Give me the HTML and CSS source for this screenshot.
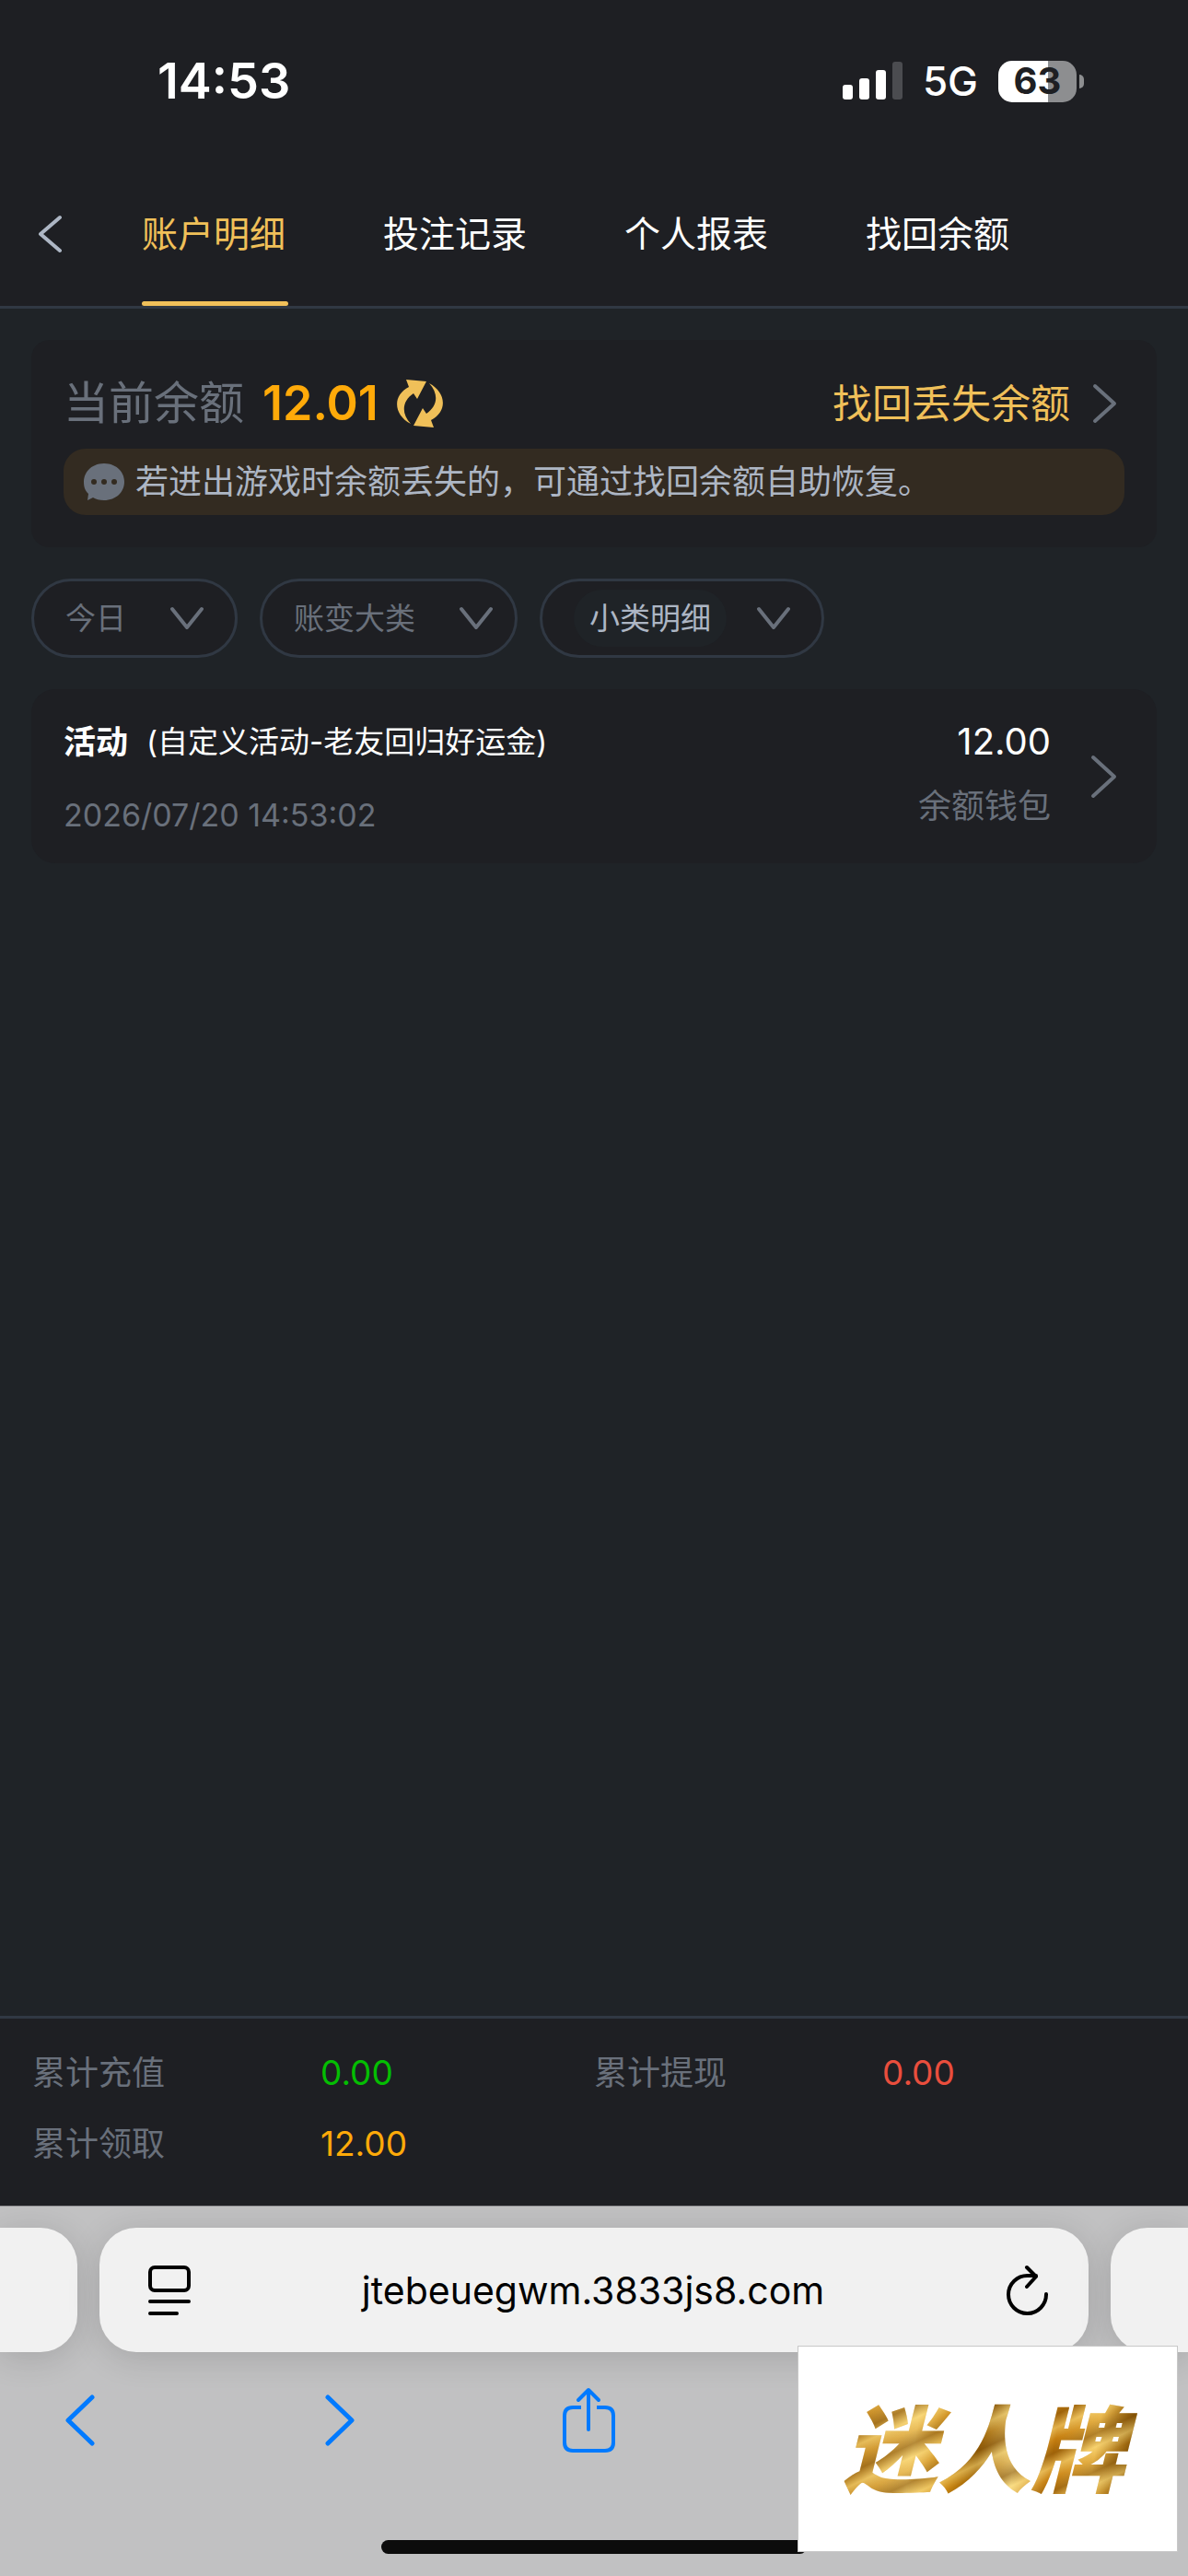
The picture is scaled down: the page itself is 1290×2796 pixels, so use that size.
FILE: index.html
```html
<!DOCTYPE html>
<html lang="zh-CN">
<head>
<meta charset="utf-8">
<meta name="viewport" content="width=device-width, initial-scale=1">
<title>账户明细</title>
<link rel="stylesheet" href="styles.css">
</head>
<body>
<header class="top">
  <div class="status">
    <time class="clock">14:53</time>
    <div class="indicators">
      <svg class="signal" width="65" height="42" viewBox="0 0 65 42" aria-hidden="true">
        <g fill="#fff"><rect y="25" width="11" height="16" rx="3"/><rect x="18" y="18" width="11" height="23" rx="3"/><rect x="36" y="9" width="11" height="32" rx="3"/></g>
        <rect x="54" width="11" height="41" rx="3" fill="#4b4c50"/>
      </svg>
      <span class="network">5G</span>
      <span class="battery"><span class="level">63</span><i class="nub"></i></span>
    </div>
  </div>
  <nav class="tabs">
    <button class="back" type="button" aria-label="返回">
      <svg width="27" height="42" viewBox="0 0 27 42"><path d="M24 3 3 21 24 39"/></svg>
    </button>
    <a class="tab active" href="#detail">账户明细</a>
    <a class="tab" href="#bets">投注记录</a>
    <a class="tab" href="#report">个人报表</a>
    <a class="tab" href="#recover">找回余额</a>
  </nav>
</header>

<main class="content">
  <section class="card balance">
    <div class="balance-row">
      <span class="balance-label">当前余额</span>
      <strong class="amount">12.01</strong>
      <button class="refresh" type="button" aria-label="刷新">
        <svg width="50" height="52" viewBox="0 0 50 52"><path id="half" d="M10 0 32 2 22 21 18 15C6 23 4 36 15 48-4 38-5 17 13 8Z"/><use href="#half" transform="rotate(180 25 26)"/></svg>
      </button>
      <a class="recover" href="#recover">找回丢失余额
        <svg class="chevron" width="27" height="44" viewBox="0 0 27 44"><path d="M3 3 24 22 3 41"/></svg>
      </a>
    </div>
    <p class="notice">
      <svg width="46" height="42" viewBox="0 0 46 42" aria-hidden="true"><path fill="#69707b" d="M23 1C36 1 45 10 45 21S36 41 23 41C18 41 14 40 11 38L5 41 6 34C2 30 1 26 1 21 1 10 10 1 23 1Z"/><g fill="#332b21"><circle cx="12" cy="21" r="3"/><circle cx="23" cy="21" r="3"/><circle cx="34" cy="21" r="3"/></g></svg>
      <span>若进出游戏时余额丢失的，可通过找回余额自助恢复。</span>
    </p>
  </section>

  <form class="filters">
    <label class="pill">
      <select aria-label="日期"><option>今日</option></select>
      <svg class="chevron" width="36" height="26" viewBox="0 0 36 26"><path d="M2 3 18 23 34 3"/></svg>
    </label>
    <label class="pill wide">
      <select aria-label="账变大类"><option>账变大类</option></select>
      <svg class="chevron" width="36" height="26" viewBox="0 0 36 26"><path d="M2 3 18 23 34 3"/></svg>
    </label>
    <label class="pill chosen">
      <select aria-label="小类明细"><option>小类明细</option></select>
      <svg class="chevron" width="36" height="26" viewBox="0 0 36 26"><path d="M2 3 18 23 34 3"/></svg>
    </label>
  </form>

  <a class="card record" href="#record">
    <span class="record-main">
      <span class="record-title"><b>活动</b><span>(自定义活动-老友回归好运金)</span></span>
      <time class="record-time">2026/07/20 14:53:02</time>
    </span>
    <span class="record-side">
      <span class="record-amount">12.00</span>
      <span class="wallet">余额钱包</span>
    </span>
    <svg class="chevron" width="30" height="48" viewBox="0 0 30 48"><path d="M3 3 26 24 3 45"/></svg>
  </a>
</main>

<footer class="totals">
  <dl>
    <div><dt>累计充值</dt><dd class="green">0.00</dd></div>
    <div><dt>累计提现</dt><dd class="red">0.00</dd></div>
    <div><dt>累计领取</dt><dd class="orange">12.00</dd></div>
  </dl>
</footer>

<section class="browser">
  <div class="pages">
    <div class="page prev"></div>
    <div class="page current">
      <button type="button" aria-label="页面菜单"><svg width="46" height="56" viewBox="0 0 46 56" fill="none" stroke="#000" stroke-width="4" stroke-linecap="round"><rect x="2" y="3" width="42" height="25" rx="5"/><path d="M2 40H44M2 53H31"/></svg></button>
      <input type="text" aria-label="网址" value="jtebeuegwm.3833js8.com">
      <button type="button" aria-label="重新载入"><svg width="46" height="56" viewBox="0 0 46 56" fill="none" stroke="#000" stroke-width="4" stroke-linecap="round" stroke-linejoin="round"><path d="M43 32A20.500 20.500 0 1 1 23 12H32M22 3 32 13 22 24"/></svg></button>
    </div>
    <div class="page next"></div>
  </div>
  <div class="toolbar">
    <button type="button" aria-label="后退"><svg width="32" height="56" viewBox="0 0 32 56"><path d="M29 3 3 28 29 53"/></svg></button>
    <button type="button" aria-label="前进"><svg width="32" height="56" viewBox="0 0 32 56"><path d="M3 3 29 28 3 53"/></svg></button>
    <button class="share" type="button" aria-label="分享"><svg width="57" height="72" viewBox="0 0 57 72"><path d="M28 46V4M17 14 28 3 39 14"/><path class="tray" d="M20 22H11Q2 22 2 31V60Q2 69 11 69H46Q55 69 55 60V31Q55 22 46 22H37"/></svg></button>
  </div>
  <div class="home-bar"></div>
  <div class="watermark">迷人牌</div>
</section>
</body>
</html>
```
FILE: styles.css
```css
* { box-sizing: border-box; }

body {
  margin: 0;
  min-height: 100vh;
  display: flex;
  flex-direction: column;
  background: #1f2327;
  color: #fff;
  font-family: Inter, "Noto Sans CJK SC", sans-serif;
  font-size: 36px;
  line-height: 44px;
}

button, select, input {
  margin: 0;
  padding: 0;
  border: 0;
  background: none;
  color: inherit;
  font: inherit;
}
button { display: flex; align-items: center; }
a { color: inherit; text-decoration: none; }
svg { display: block; flex: none; }

.top { background: #1e1f23; border-bottom: 3px solid #303843; }

.status {
  height: 176px;
  padding: 0 113px 0 171px;
  display: flex;
  align-items: center;
  justify-content: space-between;
}
.clock { font-size: 54px; font-weight: 600; }
.indicators { display: flex; align-items: center; }
.network { margin: 0 22px; font-size: 44px; font-weight: 500; }
.battery { display: flex; align-items: center; gap: 3px; }
.level {
  width: 85px;
  height: 45px;
  border-radius: 15px;
  background: linear-gradient(90deg, #fff 63%, #8d8e90 63%);
  color: #1e1f23;
  font-size: 40px;
  font-weight: 700;
  text-align: center;
}
.nub { width: 5px; height: 15px; border-radius: 0 6px 6px 0; background: #8d8e90; }

.tabs { display: flex; height: 156px; padding-left: 41px; }
.back { width: 113px; }
.back path, .chevron path {
  fill: none;
  stroke: #69707b;
  stroke-width: 4;
  stroke-linecap: round;
  stroke-linejoin: round;
}
.back path { stroke: #adb6c4; }
.tab {
  display: flex;
  align-items: center;
  margin-right: 106px;
  font-size: 39px;
  white-space: nowrap;
  position: relative;
}
.active { color: #f0c059; }
.active::after {
  content: "";
  position: absolute;
  left: 0;
  right: -3px;
  bottom: 0;
  height: 5px;
  border-radius: 3px;
  background: #f0c059;
}

.content {
  flex: 1;
  display: flex;
  flex-direction: column;
  gap: 34px;
  padding: 34px;
}
.card { background: #1e1f23; border-radius: 26px; }

.balance { padding: 37px 35px 35px; border-radius: 20px; }
.balance-row { display: flex; align-items: center; height: 64px; }
.balance-label { color: #69707b; font-size: 49px; }
.amount { margin: 0 20px; color: #ffaa09; font-size: 52px; font-weight: 600; }
.refresh { fill: #f0c059; }
.recover {
  display: flex;
  align-items: center;
  gap: 24px;
  margin-left: auto;
  padding-right: 8px;
  color: #f0c059;
  font-size: 43px;
}
.notice {
  display: flex;
  align-items: center;
  gap: 11px;
  height: 72px;
  margin: 17px 0 0;
  padding-left: 21px;
  border-radius: 24px;
  background: #332b21;
  color: #adb6c4;
}

.filters { display: flex; gap: 24px; }
.pill {
  display: flex;
  align-items: center;
  gap: 48px;
  height: 86px;
  padding: 0 34px;
  border: 3px solid #303843;
  border-radius: 43px;
  background: #1e1f23;
  color: #69707b;
  font-size: 33px;
}
.pill select { appearance: none; }
.wide { padding-right: 24px; }
.chosen { gap: 33px; }
.chosen select {
  padding: 9px 17px;
  border-radius: 32px;
  background: #1f2327;
  color: #adb6c4;
}

.record { display: flex; align-items: center; padding: 35px 42px 34px 35px; }
.record-main { flex: 1; display: flex; flex-direction: column; gap: 40px; }
.record-title { display: flex; gap: 20px; font-size: 33px; }
.record-title b { font-size: 35px; }
.record-time { color: #69707b; font-size: 34px; line-height: 36px; }
.record-side {
  align-self: flex-start;
  display: flex;
  flex-direction: column;
  gap: 26px;
  margin-right: 43px;
  text-align: right;
}
.record-amount { font-size: 40px; }
.wallet { color: #69707b; }

.totals {
  padding: 37px 35px 45px;
  border-top: 3px solid #303843;
  background: #1e1f23;
}
.totals dl { display: grid; grid-template-columns: 1fr 1fr; row-gap: 33px; margin: 0; }
.totals dl div { display: flex; }
.totals dt { width: 313px; color: #69707b; }
.totals dd { margin: 0; font-size: 37px; }
.green { color: #04be02; }
.red { color: #ea4e3d; }
.orange { color: #ffaa09; }

.browser {
  position: relative;
  overflow: hidden;
  padding: 23px 0 24px;
  border-top: 1px solid #909094;
  background: #c1c1c2;
}
.pages { display: flex; gap: 24px; height: 135px; }
.page { background: #f1f1f1; box-shadow: 0 6px 36px rgba(0, 0, 0, 0.14); }
.prev { width: 84px; border-radius: 0 40px 40px 0; }
.next { width: 84px; border-radius: 40px 0 0 40px; }
.current {
  flex: 1;
  display: flex;
  align-items: center;
  padding: 0 43px 0 53px;
  border-radius: 40px;
}
.current input {
  flex: 1;
  min-width: 0;
  height: 64px;
  padding-right: 12px;
  color: #000;
  font-size: 41px;
  line-height: 64px;
  text-align: center;
}
.toolbar {
  display: grid;
  grid-template-columns: 282fr 258fr 608fr;
  margin-top: 38px;
  padding: 0 71px;
}
.toolbar path {
  fill: none;
  stroke: #007aff;
  stroke-width: 5;
  stroke-linecap: round;
  stroke-linejoin: round;
}
.toolbar .share path { stroke-width: 4; }
.toolbar .tray { stroke-linecap: butt; }
.home-bar {
  width: 462px;
  height: 15px;
  margin: 94px auto 0;
  border-radius: 8px;
  background: #0c0c0c;
}
.watermark {
  position: absolute;
  right: 11px;
  bottom: 26px;
  width: 413px;
  height: 224px;
  padding: 2px 8px 0 0;
  border: 1px solid #c8c8c8;
  background:
    repeating-linear-gradient(155deg, rgba(120, 70, 0, 0.5) 0, rgba(255, 225, 130, 0.5) 13px, rgba(200, 125, 10, 0.2) 24px, rgba(120, 70, 0, 0.5) 37px) text,
    linear-gradient(100deg, #b97a12 14%, #f3cf72 32%, #c88712 42%, #9a650c 48%, #f6dc8c 57%, #c47d10 66%, #efc25a 76%, #8a5a0a 84%, #dda02c 88%) text,
    #fff;
  color: transparent;
  font-size: 102px;
  font-style: italic;
  font-weight: 900;
  line-height: 222px;
  text-align: center;
}
```
